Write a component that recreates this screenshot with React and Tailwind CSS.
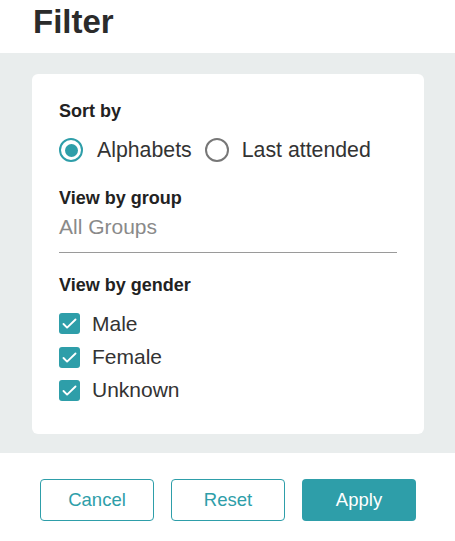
import React from "react";

function Check({ label }) {
  return (
    <div className="flex items-center gap-[12px] h-[33.4px]">
      <span className="w-[21px] h-[21px] rounded-[3px] bg-[#2e9ea9] flex items-center justify-center shrink-0">
        <svg width="21" height="21" viewBox="0 0 21 21" fill="none">
          <path d="M4.5 11l3.6 3.6L16.5 6.5" stroke="white" strokeWidth="1.9" strokeLinecap="round" strokeLinejoin="round" />
        </svg>
      </span>
      <span className="text-[21px] leading-6 text-[#333]">{label}</span>
    </div>
  );
}

export default function App() {
  return (
    <div className="w-[455px] h-[541px] bg-white font-['Liberation_Sans',Arial,sans-serif]">
      <div className="h-[53px] pl-[33px] pt-[2px]">
        <h1 className="text-[33px] leading-[40px] font-bold text-[#2b2b2b]">Filter</h1>
      </div>
      <div className="bg-[#e9eded] pt-[21px] pb-[19px] pl-[32px] pr-[31px]">
        <div className="bg-white rounded-[6px] h-[360px] pl-[27px] pr-[27px] pt-[26px]">
          <div className="text-[18px] leading-[22px] font-bold text-[#222]">Sort by</div>
          <div className="flex items-center gap-[13px] mt-[16px]">
            <span className="flex items-center gap-[14px]">
              <span className="w-6 h-6 rounded-full border-2 border-[#2e9ea9] flex items-center justify-center">
                <span className="w-[13px] h-[13px] rounded-full bg-[#2e9ea9]" />
              </span>
              <span className="text-[21.3px] leading-6 text-[#333]">Alphabets</span>
            </span>
            <span className="flex items-center gap-[13px]">
              <span className="w-6 h-6 rounded-full border-2 border-[#777]" />
              <span className="text-[21.3px] leading-6 text-[#333]">Last attended</span>
            </span>
          </div>
          <div className="text-[18px] leading-[22px] font-bold text-[#222] mt-[25px]">View by group</div>
          <div className="text-[21px] leading-6 text-[#8a8a8a] mt-[6px] pb-[13px] border-b border-[#9a9a9a]">All Groups</div>
          <div className="text-[18px] leading-[22px] font-bold text-[#222] mt-[21px]">View by gender</div>
          <div className="mt-[11px]">
            <Check label="Male" />
            <Check label="Female" />
            <Check label="Unknown" />
          </div>
        </div>
      </div>
      <div className="flex gap-[17px] pl-[40px] pt-[26px]">
        <button className="w-[114px] h-[42px] rounded-[4px] border border-[#2e9ea9] text-[#2e9ea9] text-[18.5px]">Cancel</button>
        <button className="w-[114px] h-[42px] rounded-[4px] border border-[#2e9ea9] text-[#2e9ea9] text-[18.5px]">Reset</button>
        <button className="w-[114px] h-[42px] rounded-[4px] bg-[#2e9ea9] text-white text-[18.5px]">Apply</button>
      </div>
    </div>
  );
}
